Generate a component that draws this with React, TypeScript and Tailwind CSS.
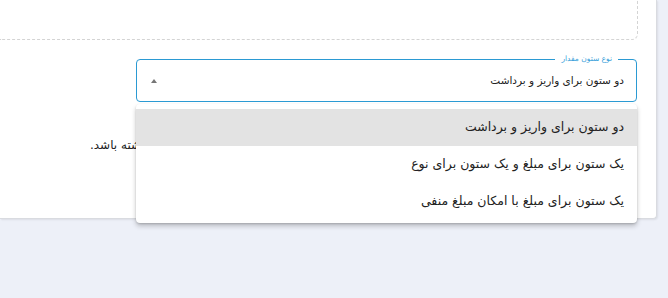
const options = [
  'دو ستون برای واریز و برداشت',
  'یک ستون برای مبلغ و یک ستون برای نوع',
  'یک ستون برای مبلغ با امکان مبلغ منفی',
];

const font = { fontFamily: '"DejaVu Sans", "Noto Sans", sans-serif' };

const App = () => {
  return (
    <div className="relative h-[298px] w-[668px] overflow-hidden bg-[#edf0f8]" style={font}>
      <div className="h-[219px] w-[657px] rounded-br-[4px] border-r border-b border-[#d9dbe0] bg-white shadow-[1px_1px_2px_rgba(0,0,0,0.08)]">
        <div className="h-[40px] w-[638px] rounded-br-[6px] border-r border-b border-dashed border-[#d4d4d4]" />

        <div className="ml-[136px] mt-[19px] w-[501px]">
          <div className="relative flex h-[43px] items-center justify-between rounded-[4px] border border-[#2b9ad3] pl-4 pr-[12px]">
            <span className="ml-[-2px] h-0 w-0 border-x-[3.5px] border-b-[4px] border-x-transparent border-b-[#767676]" />
            <span dir="rtl" className="text-[10.5px] text-[#222]">
              {options[0]}
            </span>
            <span dir="rtl" className="absolute -top-[7px] right-[18px] bg-white px-[6px] text-[7.5px] leading-[12px] text-[#3a9fda]">
              نوع ستون مقدار
            </span>
          </div>
        </div>

        <p dir="rtl" className="ml-[90px] mt-[34px] w-[540px] text-left text-[12px] text-[#222]">
          در صورت انتخاب یک ستون برای مبلغ، ستون نوع باید مقدار داشته باشد.
        </p>
      </div>

      <ul
        dir="rtl"
        className="absolute left-[136px] top-[104px] w-[501px] rounded-[4px] bg-white pt-[5px] pb-[3px] shadow-[0_3px_5px_rgba(0,0,0,0.22),0_1px_2px_rgba(0,0,0,0.14)]"
      >
        {options.map((o, i) => (
          <li
            key={o}
            className={`flex h-[37px] items-center px-[13px] text-[12.5px] text-[#222] ${i === 0 ? 'bg-[#e3e3e3]' : ''}`}
          >
            {o}
          </li>
        ))}
      </ul>
    </div>
  );
};

export default App;
